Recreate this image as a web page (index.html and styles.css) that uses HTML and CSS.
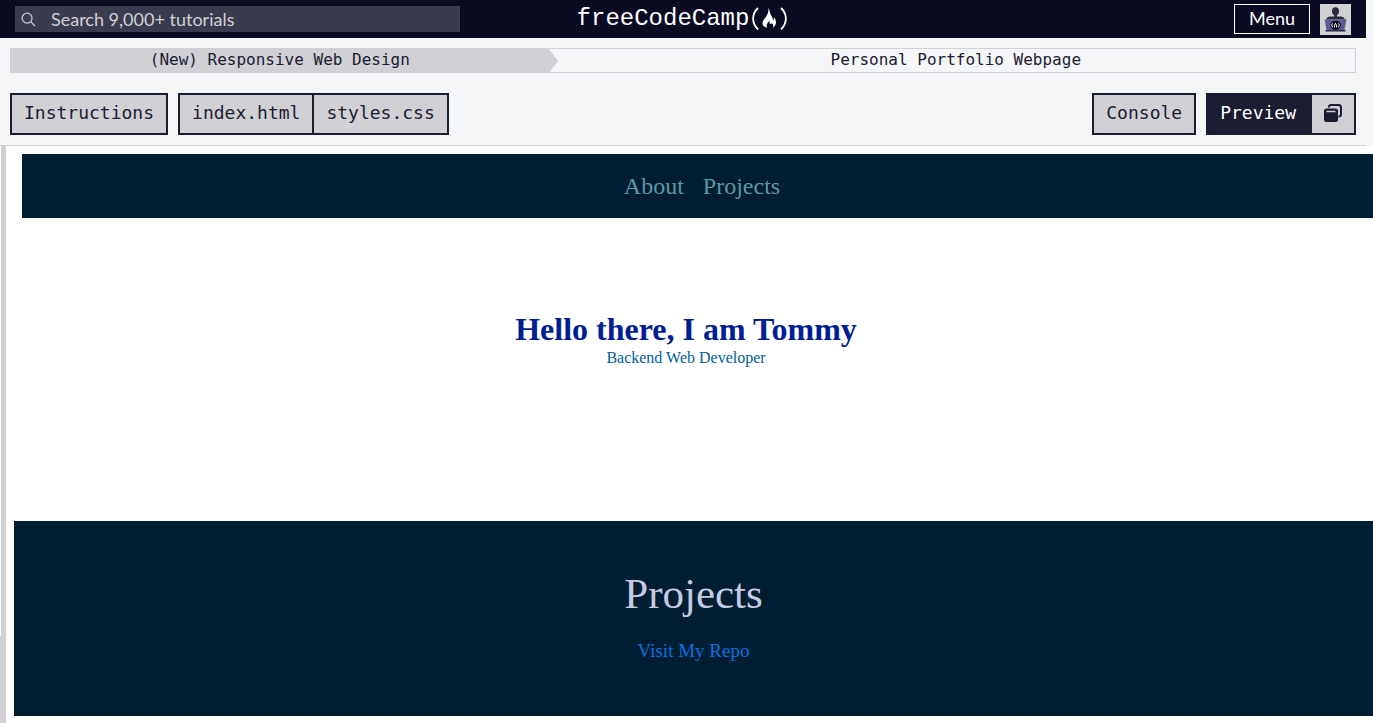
FILE: index.html
```html
<!DOCTYPE html>
<html lang="en">
<head>
<meta charset="utf-8">
<meta name="viewport" content="width=device-width, initial-scale=1">
<title>Personal Portfolio Webpage</title>
<link rel="stylesheet" href="styles.css">
</head>
<body>
<div class="shell">
  <header class="site-header">
    <form class="search" role="search">
      <svg class="search-icon" viewBox="0 0 16 16" aria-hidden="true"><circle cx="6.5" cy="6.5" r="5.3"/><path d="M10.4 10.4 15 15"/></svg>
      <input class="search-input" type="search" placeholder="Search 9,000+ tutorials" aria-label="Search tutorials">
    </form>
    <a class="logo" href="#"><span>freeCodeCamp</span>
      <svg class="logo-mark" viewBox="0 0 40 26" aria-hidden="true">
        <path class="paren" d="M9 2C2.500 8 2.500 17 9 23.500M32 2C38.500 8 38.500 17 32 23.500"/>
        <path class="flame" d="M19.500 2C21 5 20.500 7 22.500 10C23.500 11.700 24 13 24 14.500C25 13.800 25 12.500 24.700 11.300C27.500 13.500 28.300 19 23.800 21.800C24.800 19.500 24 17.500 22.300 17.200C21.600 18.800 20.200 17.700 20.600 15C18 16.500 17 19.300 18 21.800C12.500 20.500 12.800 15.800 15.300 13C17.800 10 19.800 7 19.500 2Z"/>
      </svg>
    </a>
    <div class="account">
      <button class="menu" type="button">Menu</button>
      <a class="avatar" href="#" aria-label="Profile">
        <svg viewBox="0 0 31 31" aria-hidden="true">
          <ellipse cx="15.500" cy="7.300" rx="3.500" ry="4" fill="#2a2a40"/>
          <path fill="#2a2a40" d="M14 10.500h3v2h3.500q3.500 0 4.500 3H6q1-3 4.500-3H14z"/>
          <path fill="#5a5a91" d="M4.500 15.500h22l-2 10.500h-18z"/>
          <path fill="#2a2a40" d="M5.500 26h20v1.500h-20z"/>
          <ellipse cx="15.500" cy="21.300" rx="5.300" ry="4.500" fill="#0a0a23"/>
          <path fill="none" stroke="#fff" d="M12.500 19.300q-1.500 2 0 4M18.500 19.300q1.500 2 0 4M14.500 23.300v-2l1-2 1 2v2"/>
        </svg>
      </a>
    </div>
  </header>

  <nav class="crumbs" aria-label="Breadcrumb">
    <a class="crumb crumb-course" href="#">(New) Responsive Web Design</a>
    <a class="crumb crumb-step" href="#">Personal Portfolio Webpage</a>
  </nav>

  <div class="toolbar">
    <button class="tab" type="button">Instructions</button>
    <div class="tab-group">
      <button class="tab" type="button">index.html</button>
      <button class="tab" type="button">styles.css</button>
    </div>
    <button class="tab tab-console" type="button">Console</button>
    <div class="tab-group">
      <button class="tab tab-active" type="button">Preview</button>
      <button class="tab tab-icon" type="button" aria-label="Open preview in new window">
        <svg viewBox="0 0 20 20" aria-hidden="true">
          <path fill="none" stroke="#1b1b32" stroke-width="2" d="M6 4.500V4Q6 2 8 2H15.500Q18 2 18 4.500V11Q18 13.500 16 13.500H15.500"/>
          <rect x="1" y="5.500" width="14" height="13.500" rx="2.500" fill="#1b1b32"/>
          <path stroke="#d0d0d5" stroke-width="1.500" d="M3.500 8.500h9"/>
        </svg>
      </button>
    </div>
  </div>
</div>

<div class="workspace">
  <div class="splitter"></div>
  <main class="preview">
    <nav class="page-nav"><a href="#about">About</a><a href="#projects">Projects</a></nav>
    <section class="welcome" id="about">
      <h1>Hello there, I am Tommy</h1>
      <p>Backend Web Developer</p>
    </section>
    <section class="projects" id="projects">
      <h2>Projects</h2>
      <a href="#">Visit My Repo</a>
    </section>
  </main>
</div>
</body>
</html>
```
FILE: styles.css
```css
* { box-sizing: border-box; }
body {
  display: flex;
  flex-direction: column;
  min-height: 100vh;
  margin: 0;
  overflow-x: hidden;
  background: #fff;
  font-family: "Liberation Serif", serif;
}
a { text-decoration: none; }
.shell {
  padding-right: 7px;
  background: #f5f6f7;
}
.site-header {
  display: grid;
  grid-template-columns: 1fr auto 1fr;
  align-items: center;
  height: 38px;
  padding: 0 15px;
  background: #0a0a23;
}
.search {
  display: flex;
  align-items: center;
  width: 445px;
  height: 26px;
  padding-left: 6px;
  background: #3b3b4f;
}
.search-icon {
  flex: none;
  width: 15px;
  height: 15px;
  fill: none;
  stroke: #d0d0d5;
  stroke-width: 1.3;
}
.search-input {
  flex: 1;
  min-width: 0;
  padding: 0 15px;
  border: 0;
  outline: 0;
  background: transparent;
  color: #d0d0d5;
  font: 18px/26px Lato, sans-serif;
}
.search-input::placeholder { color: #d0d0d5; opacity: 1; }
.logo {
  display: flex;
  align-items: center;
  height: 36px;
  color: #fff;
  font: 24px/34px "Liberation Mono", monospace;
}
.logo-mark { width: 40px; height: 26px; }
.paren { fill: none; stroke: #fff; stroke-width: 1.8; }
.flame { fill: #fff; }
.account {
  display: flex;
  justify-content: flex-end;
  gap: 10px;
}
.menu {
  width: 76px;
  height: 30px;
  padding: 0 0 2px;
  border: 1px solid #fff;
  background: #0a0a23;
  color: #fff;
  font: 18px/26px Lato, sans-serif;
}
.avatar {
  width: 31px;
  height: 31px;
  background: #d0d0d5;
}
.avatar svg { display: block; }
.crumbs {
  display: grid;
  grid-template-columns: 2fr 3fr;
  height: 25px;
  margin: 10px 10px 0;
  border: 1px solid #d0d0d5;
  font: 16px/22px "DejaVu Sans Mono", monospace;
  text-align: center;
}
.crumb { color: #1b1b32; }
.crumb-course {
  position: relative;
  background: #d0d0d5;
}
.crumb-course::after {
  content: "";
  position: absolute;
  top: 0;
  left: 100%;
  border-block: 12px solid transparent;
  border-left: 9px solid #d0d0d5;
}
.crumb-step { padding-left: 8px; }
.toolbar {
  display: flex;
  gap: 10px;
  padding: 20px 10px 10px;
  border-bottom: 1px solid #d0d0d5;
}
.tab-group { display: flex; }
.tab {
  height: 42px;
  padding: 0 12px 2px;
  border: 2px solid #1b1b32;
  background: #d0d0d5;
  color: #1b1b32;
  font: 18px/36px "DejaVu Sans Mono", monospace;
}
.tab-group .tab + .tab { border-left-width: 0; }
.tab-console { margin-left: auto; }
.tab-active { padding-right: 14px; background: #1b1b32; color: #fff; }
.tab-icon { padding: 0 11px 2px; }
.tab-icon svg { display: block; width: 20px; height: 20px; }
.workspace {
  display: flex;
  flex: 1;
}
.splitter {
  flex: none;
  width: 6px;
  background:
    linear-gradient(#fff, #fff) 0 0 / 1px 85% no-repeat,
    #d0d0d5;
}
.preview {
  flex: 1;
  padding: 8px 0 7px 8px;
}
.page-nav {
  display: flex;
  justify-content: center;
  gap: 19px;
  margin-left: 8px;
  padding-left: 9px;
  background: #001e31;
  font-size: 24px;
  line-height: 64px;
}
.page-nav a { color: #5f96a4; }
.welcome {
  display: flex;
  flex-direction: column;
  justify-content: center;
  height: 303px;
  padding: 0 15px 62px 0;
  text-align: center;
}
.welcome h1 {
  margin: 0;
  color: #001e94;
  font-size: 32px;
  line-height: 38px;
}
.welcome p {
  margin: 0;
  color: #00609a;
  font-size: 16px;
  line-height: 20px;
}
.projects {
  height: 195px;
  padding-top: 48px;
  background: #001e31;
  text-align: center;
}
.projects h2 {
  margin: 0 0 20px;
  color: #c6cae2;
  font-size: 43px;
  font-weight: 400;
  line-height: 50px;
}
.projects a {
  color: #0972e0;
  font-size: 19px;
  line-height: 24px;
}
```
